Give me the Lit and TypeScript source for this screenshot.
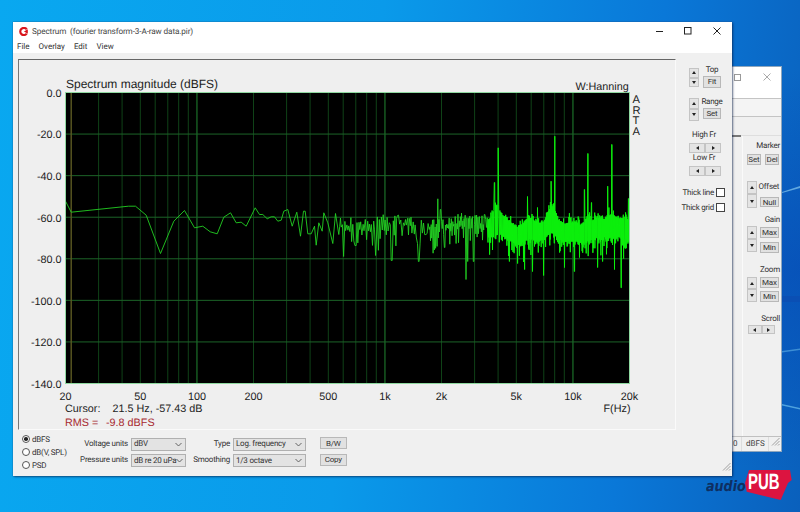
import { LitElement, html, css, svg } from "lit";
import { customElement } from "lit/decorators.js";

const PX = 66, PW = 564, PY = 93, PH = 291;
const fx = (f: number) => PX + (Math.log10(f / 20) / 3) * PW;
const dy = (d: number) => PY + (-d / 140) * PH;

const low: [number, number][] = [
  [66, 201.7], [71.7, 212.7], [129, 206.7], [136, 206.7], [146.7, 215.7], [161, 254], [174.3, 221.7], [185, 211],
  [195, 228.3], [203.3, 226.7], [210.7, 232.3], [217.7, 234.3], [224.3, 217.7], [231, 213.3], [236.7, 223.3],
  [241.7, 222.7], [246.7, 226.7], [255.7, 208.3], [260, 215], [263.3, 215], [267.7, 219.3], [271.7, 217.3],
  [275, 217.3], [278.3, 221.7], [281.7, 220.7], [284.3, 211.7], [288.3, 210], [292.7, 226.7], [297.3, 212.7],
  [301, 236.7], [304, 211.7], [305.7, 211.7], [308.3, 234.3], [311.7, 234.3], [315, 226.7], [316.7, 245.7],
  [319.3, 223.3], [322.7, 231.7], [324.3, 213.3], [328.3, 223.3], [333.3, 244], [336, 214], [339.3, 235],
];

const peaks: [number, number][] = [
  [344, 257], [356, 246], [376, 256], [392, 261], [398, 216], [418, 244], [419, 262], [426, 235], [438.3, 199.3],
  [441, 210], [445, 248], [466.7, 280], [468, 262], [474, 262], [485, 215], [495, 183], [498.7, 148.3],
  [528, 197], [533, 272], [538, 208], [544, 276], [551.7, 181.7], [555.3, 136.7], [588.3, 154], [585, 190],
  [592, 203], [598, 268], [608.3, 186.7], [612.3, 145], [621.7, 288.3], [625, 248], [629, 199], [615, 270],
  [510, 262], [518, 264], [525, 270], [565, 268], [575, 272], [603, 262], [580, 258],
];
const humps: [number, number, number][] = [
  [497, 14, 5], [552, 9, 4], [588, 8, 4], [612, 7, 5], [530, 4, 6], [628, 5, 6],
];

function buildTrace(): { mid: string; high: string } {
  let seed = 42;
  const r = () => {
    seed = (seed * 1664525 + 1013904223) >>> 0;
    return seed / 4294967296;
  };
  const a: [number, number][] = low.slice();
  const b: [number, number][] = [];
  let x = 339.3;
  let up = false;
  while (x < 630) {
    const step = x < 430 ? 1 : x < 488 ? 0.65 : x < 505 ? 0.45 : 0.26;
    x += step * (0.7 + r() * 0.6);
    let y: number;
    if (x < 488) {
      const wob = 3 * Math.sin(x / 11);
      y = up ? 216 + wob + r() * 10 : 227 + wob + r() * r() * 30;
    } else {
      const wob = 3 * Math.sin(x / 9) + 2 * Math.sin(x / 3.7);
      let hump = 0;
      for (const [c, h, w] of humps) hump += h * Math.exp(-(((x - c) / w) ** 2));
      y = up
        ? 223 + wob - hump - r() * r() * r() * 14
        : 240 + wob - hump * 0.3 + r() * r() * r() * 28;
    }
    up = !up;
    for (const [px, py] of peaks) {
      if (Math.abs(px - x) < step * 0.75) y = py;
    }
    (x < 488 ? a : b).push([x, y]);
  }
  b.unshift(a[a.length - 1]);
  b.push([630, 228]);
  const s = (l: [number, number][]) => l.map((p) => `${p[0].toFixed(1)},${p[1].toFixed(1)}`).join(" ");
  return { mid: s(a), high: s(b) };
}
const TRACE = buildTrace();

function freqGrid() {
  const out: { x: number; major: boolean }[] = [];
  for (const dec of [10, 100, 1000, 10000]) {
    for (let m = 1; m <= 10; m++) {
      const f = dec * m;
      if (f < 20 || f > 20000) continue;
      out.push({ x: fx(f), major: m === 10 && dec < 10000 });
    }
  }
  return out;
}

const spinUpDown = html`<div class="spin">
  <button class="sb"><i class="tri up"></i></button>
  <button class="sb"><i class="tri down"></i></button>
</div>`;
const leftRight = html`<div class="lr">
  <button class="sb"><i class="tri left"></i></button>
  <button class="sb"><i class="tri right"></i></button>
</div>`;

@customElement("app-root")
export class AppRoot extends LitElement {
  static styles = css`
    :host { display: block; position: relative; width: 800px; height: 512px; overflow: hidden;
      font-family: Roboto, "Noto Sans", sans-serif; color: #222; text-rendering: geometricPrecision;
      background:
        radial-gradient(ellipse 360px 200px at 800px 270px, rgba(5,70,180,.55), transparent),
        linear-gradient(96deg, #09a8f0 0%, #0a9aea 45%, #0a78d8 78%, #0a60bc 100%); }
    button { font: inherit; color: inherit; padding: 0; margin: 0; }
    .wall { position: absolute; inset: 0; }
    .win { position: absolute; box-sizing: border-box; background: #f0f0f0; display: flex; flex-direction: column; }
    .back { left: 640px; top: 66px; width: 142px; height: 386px; border: 1px solid #8ea6bd; }
    .main { left: 13px; top: 22px; width: 719px; height: 454px; box-shadow: 1px 1px 2px rgba(0,20,60,.55), 0 0 1px #2a4a70; }
    .title { height: 18px; background: #fff; display: flex; align-items: center; font-size: 8.2px; letter-spacing: -.12px; color: #444; flex: none; }
    .title svg.logo { margin: 1px 4px 0 6px; flex: none; }
    .title .name { flex: 1; white-space: pre; padding-top: 1px; }
    .ctl { display: flex; align-items: center; color: #222; }
    .ctl svg { display: block; }
    .main .ctl { gap: 21px; padding: 0 11px 0 0; }
    .menu { height: 13px; background: #fff; display: flex; gap: 9px; padding-left: 4px; font-size: 8px; line-height: 13px; color: #333; flex: none; }
    .body { flex: 1; display: grid; grid-template-columns: 663px 56px; grid-template-rows: 377px 1fr; }
    .plotwrap { grid-column: 1; grid-row: 1; padding: 6px 0 0 5px; }
    .panel { box-sizing: border-box; width: 658px; height: 371px; border: 1px solid #fafafa; border-top: 1.5px solid #666; border-left: 1.5px solid #777; background: #efefef; }
    .panel svg { display: block; overflow: visible; }
    .panel text { font-family: "Liberation Sans", Arial, sans-serif; font-size: 10.8px; fill: #1d1d1d; }
    .panel text.rms { fill: #a82a30; }
    .panel text.big { font-size: 12px; }
    .panel text.arta { font-size: 11.2px; }

    .side { grid-column: 2; grid-row: 1 / span 2; padding: 15px 0 0 13px; display: flex; flex-direction: column; font-size: 8px; letter-spacing: -.25px; color: #333; }
    .spin { display: flex; flex-direction: column; width: 10px; flex: none; }
    .sb { display: flex; align-items: center; justify-content: center; background: #e4e4e4; border: 1px solid #c4c4c4; box-sizing: border-box; }
    .spin .sb { width: 10px; height: 9.5px; }
    .lr { display: flex; }
    .lr .sb { width: 16px; height: 10px; }
    .tri { display: block; width: 0; height: 0; border: 2px solid transparent; }
    .tri.up { border-bottom: 3px solid #222; border-top: 0; }
    .tri.down { border-top: 3px solid #222; border-bottom: 0; }
    .tri.left { border-right: 3px solid #222; border-left: 0; }
    .tri.right { border-left: 3px solid #222; border-right: 0; }
    .spinrow { display: flex; gap: 4px; }
    .stack { display: flex; flex-direction: column; align-items: center; width: 18px; margin-top: -3px; }
    .stack .lbl { height: 11px; line-height: 10px; white-space: nowrap; }
    .btn { background: #e1e1e1; border: 1px solid #b8b8b8; box-sizing: border-box; font-size: 8px; letter-spacing: -.2px; line-height: 9px; text-align: center; color: #333; }
    .b18 { width: 18px; height: 11.5px; }
    .range { margin-top: 10px; }
    .range .spin .sb { height: 11.5px; }
    .range .stack { margin-top: -1px; }
    .fr { margin-top: 9px; display: flex; flex-direction: column; width: 32px; }
    .fr .lbl { text-align: center; line-height: 10px; height: 13px; padding-right: 2px; white-space: nowrap; }
    .checks { margin-top: 12px; display: flex; flex-direction: column; gap: 6px; margin-left: -4px; width: 40px; }
    .chk { display: flex; align-items: center; justify-content: flex-end; gap: 2px; white-space: nowrap; height: 9px; }
    .chk i { display: block; width: 9px; height: 9px; box-sizing: border-box; background: #fff; border: 1px solid #444; flex: none; }

    .bottom { grid-column: 1; grid-row: 2; display: flex; align-items: flex-start; font-size: 8px; letter-spacing: -.22px; color: #333; padding: 8px 0 0 9px; }
    .radios { display: flex; flex-direction: column; gap: 5px; width: 50px; margin-top: -3px; }
    .radio { display: flex; align-items: center; gap: 2px; height: 8px; white-space: nowrap; }
    .radio i { display: block; box-sizing: border-box; width: 8px; height: 8px; border: 1px solid #555; border-radius: 50%; background: #fff; position: relative; flex: none; }
    .radio i.on::after { content: ""; position: absolute; inset: 1.2px; border-radius: 50%; background: #222; }
    .fields { display: grid; row-gap: 3.7px; align-items: center; column-gap: 3px; }
    .f1 { grid-template-columns: 56px 54.7px; }
    .f2 { grid-template-columns: 44px 72.7px; margin-left: .3px; }
    .fields label { text-align: right; white-space: nowrap; padding-bottom: 2px; }
    .sel { box-sizing: border-box; height: 12.7px; background: #e3e3e3; border: 1px solid #b0b0b0; display: flex; align-items: center; justify-content: space-between; padding: 0 3px 0 2px; line-height: 10px; white-space: nowrap; overflow: hidden; }
    .sel svg { flex: none; }
    .btns { display: flex; flex-direction: column; gap: 4.6px; margin: -1px 0 0 14.3px; }
    .btns .btn { width: 26.7px; height: 12px; }
    .grip { position: absolute; right: 1px; bottom: 1px; }

    .back .title { height: 31px; padding: 0; align-items: flex-start; justify-content: flex-end; }
    .back .ctl { gap: 22px; padding: 6px 10px 0 0; }
    .b-menu { height: 17px; background: #f4f4f4; border-top: 1px solid #c4c4c4; border-bottom: 1px solid #c4c4c4; flex: none; }
    .b-tool { height: 18px; background: #f0f0f0; flex: none; }
    .b-body { flex: 1; display: flex; justify-content: flex-end; min-height: 0; border-top: 1px solid #dedede; position: relative; }
    .b-edge { position: absolute; left: 0; top: -1px; width: 100px; height: 1.5px; background: #777; }
    .b-sep { position: absolute; left: 100.5px; top: 0; bottom: 0; width: 1px; background: #fafafa; }
    .b-col { width: 40px; box-sizing: border-box; padding: 4px 1px 0 6px; display: flex; flex-direction: column; font-size: 8px; letter-spacing: -.2px; color: #333; }
    .b-col .lbl { text-align: right; height: 11px; line-height: 11px; white-space: nowrap; }
    .rowb { display: flex; gap: 4.5px; margin-top: 3px; }
    .rowb .btn { width: 13.7px; height: 11px; }
    .offset { display: flex; gap: 2.6px; margin-top: 15.7px; }
    .offset .spin .sb { height: 13.6px; }
    .offset .stack { width: 19.7px; margin-top: .8px; align-items: flex-end; }
    .offset .btn, .bspin .btn { width: 19.7px; }
    .offset .btn { height: 10.6px; }
    .gap4 { height: 4.2px; }
    .bspin { display: flex; gap: 2.6px; }
    .btns2 { display: flex; flex-direction: column; }
    .gain { margin-top: 6.5px; }
    .gain .lbl { margin-bottom: .5px; }
    .gain .spin .sb { height: 13.3px; }
    .gain .btns2 { margin-top: 1px; gap: 3.4px; }
    .gain .btn { height: 11.3px; }
    .zoom { margin-top: 10.9px; }
    .zoom .lbl { margin-bottom: 2px; }
    .zoom .spin .sb { height: 12.5px; }
    .zoom .btns2 { gap: 2.6px; }
    .zoom .btn { height: 11.4px; }
    .scroll { margin-top: 10.8px; }
    .scroll .lbl { margin-bottom: 1.5px; }
    .scroll .lr { margin-left: 1px; }
    .scroll .lr .sb { width: 13.5px; height: 9px; }
    .status { height: 14px; border-top: 1px solid #c0c0c0; background: #f0f0f0; font-size: 8px; line-height: 13px; color: #444; display: flex; justify-content: flex-end; flex: none; position: relative; }
    .status .cells { width: 50px; display: flex; box-sizing: border-box; padding-left: 2px; }
    .status .c0 { width: 8px; }
    .status .c1 { width: 28px; box-sizing: border-box; padding-left: 4px; border-left: 1px solid #ddd; border-right: 1px solid #ddd; }
    .status .grip2 { position: absolute; right: 1px; bottom: 1px; }

    .brand { position: absolute; left: 705px; top: 469px; width: 92px; height: 34px; }
    .brand svg { position: absolute; left: 0; top: 0; }
    .brand .audio { position: absolute; left: 1px; top: 9px; font: italic 700 14.6px/18px "DejaVu Sans", sans-serif; color: #0e2f62; transform: scaleX(.87); transform-origin: 0 0; }
    .brand .pub { position: absolute; left: 43px; top: 1.4px; font: 700 22px/24px "Liberation Sans", sans-serif; color: #fff; transform: scaleX(.68); transform-origin: 0 0; }
  `;

  private chart() {
    const db = [0, -20, -40, -60, -80, -100, -120, -140];
    const xs: [string, number][] = [["20", 20], ["50", 50], ["100", 100], ["200", 200], ["500", 500], ["1k", 1000], ["2k", 2000], ["5k", 5000], ["10k", 10000], ["20k", 20000]];
    return html`<svg width="655.5" height="368.5" viewBox="19.5 60.5 655.5 368.5">
      <rect x=${PX} y=${PY} width=${PW} height=${PH} fill="#000"></rect>
      ${freqGrid().map((g) => svg`<line x1=${g.x} x2=${g.x} y1=${PY} y2=${PY + PH} stroke=${g.major ? "#1f6a2a" : "#114a1a"} stroke-width=${g.major ? 1.2 : 0.9}></line>`)}
      ${db.slice(1, -1).map((d) => svg`<line x1=${PX} x2=${PX + PW} y1=${dy(d)} y2=${dy(d)} stroke="#1c6428" stroke-width="1"></line>`)}
      <line x1="71.7" x2="71.7" y1=${PY} y2=${PY + PH} stroke="#5c5a22" stroke-width="1.4"></line>
      <polyline points=${TRACE.mid} fill="none" stroke="#22cf22" stroke-width=".9" stroke-linejoin="round"></polyline>
      <polyline points=${TRACE.high} fill="none" stroke="#0cf00c" stroke-width="1" stroke-linejoin="round"></polyline>
      <rect x=${PX} y=${PY} width=${PW} height=${PH} fill="none" stroke="#8fd8a0" stroke-width="1"></rect>
      ${db.map((d) => svg`<text x="62" y=${dy(d) + 4.3} text-anchor="end">${d.toFixed(1)}</text>`)}
      ${xs.map(([l, f]) => svg`<text x=${fx(f)} y="400.5" text-anchor="middle">${l}</text>`)}
      <text x="66.5" y="88.5" class="big">Spectrum magnitude (dBFS)</text>
      <text x="576" y="90">W:Hanning</text>
      <text x="633" y="103" class="arta">A</text>
      <text x="633" y="114" class="arta">R</text>
      <text x="633" y="124.5" class="arta">T</text>
      <text x="633" y="135.5" class="arta">A</text>
      <text x="65.5" y="412">Cursor:</text>
      <text x="113" y="412">21.5 Hz, -57.43 dB</text>
      <text x="65.5" y="426.5" class="rms">RMS =</text>
      <text x="106.5" y="426.5" class="rms">-9.8 dBFS</text>
      <text x="604" y="412">F(Hz)</text>
    </svg>`;
  }

  private chev() {
    return html`<svg width="7" height="5" viewBox="0 0 7 5"><path d="M.5 1 3.5 4 6.5 1" fill="none" stroke="#555" stroke-width=".9"></path></svg>`;
  }

  private grip() {
    return html`<svg width="9" height="9" viewBox="0 0 9 9"><path d="M8.5 1 1 8.5M8.5 4 4 8.5M8.5 7 7 8.5" stroke="#a0a0a0" stroke-width="1" fill="none"></path></svg>`;
  }

  render() {
    return html`
      <svg class="wall" width="800" height="512" viewBox="0 0 800 512">
        <path d="M782 192 800 186V188L782 193Z" fill="#9ddcf7" opacity=".6"></path>
        <path d="M782 296 800 296V302H782Z" fill="#0a4fb4"></path>
        <path d="M782 351 800 348.5V350L782 352.5Z" fill="#7fd0f5" opacity=".45"></path>
        <path d="M782 404 800 408V409.5L782 405.5Z" fill="#7fd0f5" opacity=".6"></path>
      </svg>
      <section class="win back">
        <div class="title">
          <div class="ctl">
            <svg width="7" height="7" viewBox="0 0 7 7"><rect x=".5" y=".5" width="6" height="6" fill="none" stroke="#999"></rect></svg>
            <svg width="8" height="8" viewBox="0 0 8 8"><path d="M.5.5 7.5 7.5M7.5.5.5 7.5" stroke="#aaa"></path></svg>
          </div>
        </div>
        <div class="b-menu"></div>
        <div class="b-tool"></div>
        <div class="b-body">
          <i class="b-edge"></i><i class="b-sep"></i>
          <div class="b-col">
            <div class="lbl">Marker</div>
            <div class="rowb"><button class="btn">Set</button><button class="btn">Del</button></div>
            <div class="offset">
              ${spinUpDown}
              <div class="stack"><div class="lbl">Offset</div><div class="gap4"></div><button class="btn">Null</button></div>
            </div>
            <div class="gain">
              <div class="lbl">Gain</div>
              <div class="bspin">${spinUpDown}<div class="btns2"><button class="btn">Max</button><button class="btn">Min</button></div></div>
            </div>
            <div class="zoom">
              <div class="lbl">Zoom</div>
              <div class="bspin">${spinUpDown}<div class="btns2"><button class="btn">Max</button><button class="btn">Min</button></div></div>
            </div>
            <div class="scroll">
              <div class="lbl">Scroll</div>
              ${leftRight}
            </div>
          </div>
        </div>
        <div class="status">
          <div class="cells"><span class="c0">0</span><span class="c1">dBFS</span></div>
          <span class="grip2">${this.grip()}</span>
        </div>
      </section>

      <section class="win main">
        <div class="title">
          <svg class="logo" width="9" height="9" viewBox="0 0 10 10">
            <path d="M8.6 2.6A4 4 0 1 0 8.6 7.4" fill="none" stroke="#d8141c" stroke-width="2.4"></path>
            <path d="M5.5 5 9.8 2.6V7.4Z" fill="#d8141c"></path>
          </svg>
          <span class="name">Spectrum  (fourier transform-3-A-raw data.pir)</span>
          <div class="ctl">
            <svg width="7" height="8" viewBox="0 0 7 8"><path d="M0 4.5H7" stroke="#222"></path></svg>
            <svg width="8" height="8" viewBox="0 0 8 8"><rect x=".5" y=".5" width="6.5" height="6.5" fill="none" stroke="#222"></rect></svg>
            <svg width="8" height="8" viewBox="0 0 8 8"><path d="M.5.5 7.5 7.5M7.5.5.5 7.5" stroke="#222"></path></svg>
          </div>
        </div>
        <nav class="menu"><span>File</span><span>Overlay</span><span>Edit</span><span>View</span></nav>
        <div class="body">
          <div class="plotwrap"><div class="panel">${this.chart()}</div></div>
          <aside class="side">
            <div class="spinrow">
              ${spinUpDown}
              <div class="stack"><div class="lbl">Top</div><button class="btn b18">Fit</button></div>
            </div>
            <div class="spinrow range">
              ${spinUpDown}
              <div class="stack"><div class="lbl">Range</div><button class="btn b18">Set</button></div>
            </div>
            <div class="fr">
              <div class="lbl">High Fr</div>
              ${leftRight}
              <div class="lbl">Low Fr</div>
              ${leftRight}
            </div>
            <div class="checks">
              <div class="chk">Thick line<i></i></div>
              <div class="chk">Thick grid<i></i></div>
            </div>
          </aside>
          <div class="bottom">
            <div class="radios">
              <div class="radio"><i class="on"></i>dBFS</div>
              <div class="radio"><i></i>dB(V, SPL)</div>
              <div class="radio"><i></i>PSD</div>
            </div>
            <div class="fields f1">
              <label>Voltage units</label><div class="sel">dBV ${this.chev()}</div>
              <label>Pressure units</label><div class="sel">dB re 20 uPa ${this.chev()}</div>
            </div>
            <div class="fields f2">
              <label>Type</label><div class="sel">Log. frequency ${this.chev()}</div>
              <label>Smoothing</label><div class="sel">1/3 octave ${this.chev()}</div>
            </div>
            <div class="btns"><button class="btn">B/W</button><button class="btn">Copy</button></div>
          </div>
        </div>
        <span class="grip">${this.grip()}</span>
      </section>

      <div class="brand">
        <span class="audio">audio</span>
        <svg width="92" height="34" viewBox="0 0 92 34">
          <path d="M44 1H85L86.7 11 83 14 80 21 75.7 31 41.7 22.7 40 14Z" fill="#dc1440"></path>
        </svg>
        <span class="pub">PUB</span>
      </div>
    `;
  }
}
